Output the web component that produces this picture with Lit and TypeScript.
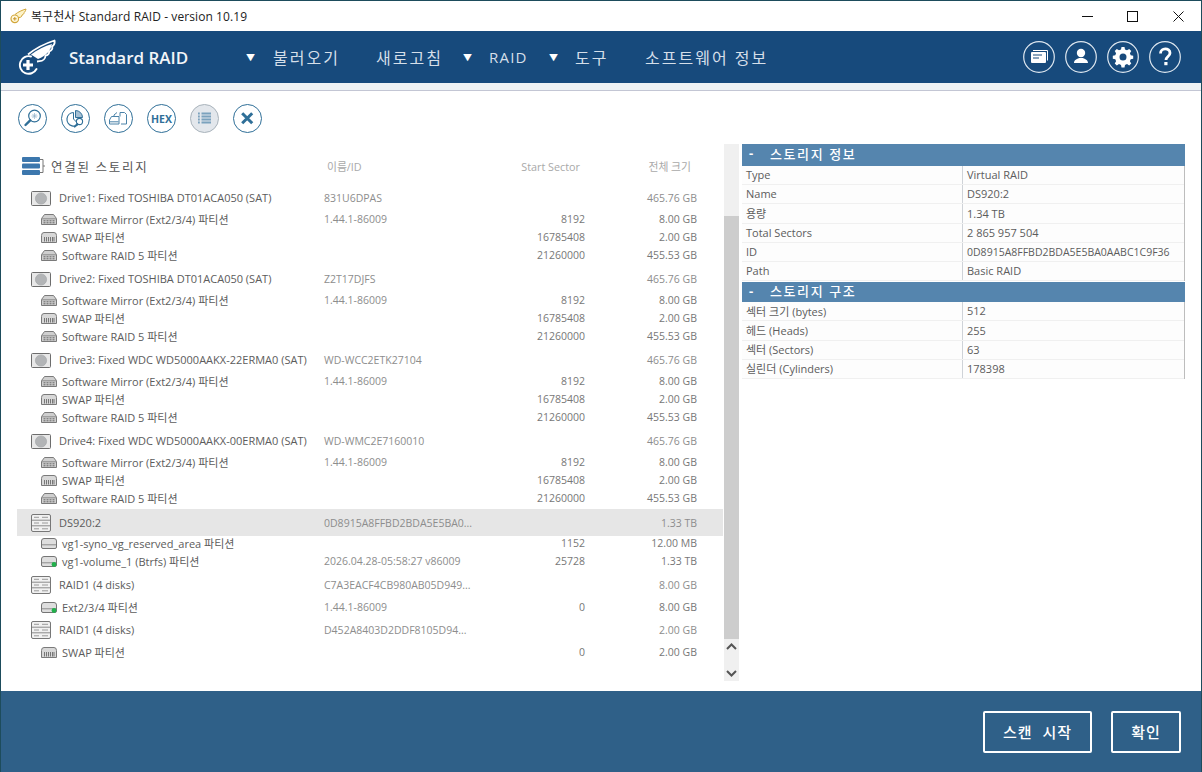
import { LitElement, html, css, svg } from "lit";
import { customElement } from "lit/decorators.js";

interface Row { t: "d" | "p"; k: string; name: string; id?: string; start?: string; size: string; sel?: boolean; cls?: string }

const partitions = (): Row[] => [
  { t: "p", k: "mirror", name: "Software Mirror (Ext2/3/4) 파티션", id: "1.44.1-86009", start: "8192", size: "8.00 GB" },
  { t: "p", k: "swap", name: "SWAP 파티션", start: "16785408", size: "2.00 GB" },
  { t: "p", k: "mirror", name: "Software RAID 5 파티션", start: "21260000", size: "455.53 GB" },
];
const rows: Row[] = [
  { t: "d", k: "hdd", name: "Drive1: Fixed TOSHIBA DT01ACA050 (SAT)", id: "831U6DPAS", size: "465.76 GB" },
  ...partitions(),
  { t: "d", k: "hdd", name: "Drive2: Fixed TOSHIBA DT01ACA050 (SAT)", id: "Z2T17DJFS", size: "465.76 GB", cls: "gap" },
  ...partitions(),
  { t: "d", k: "hdd", name: "Drive3: Fixed WDC WD5000AAKX-22ERMA0 (SAT)", id: "WD-WCC2ETK27104", size: "465.76 GB", cls: "gap" },
  ...partitions(),
  { t: "d", k: "hdd", name: "Drive4: Fixed WDC WD5000AAKX-00ERMA0 (SAT)", id: "WD-WMC2E7160010", size: "465.76 GB", cls: "gap" },
  ...partitions(),
  { t: "d", k: "rack", name: "DS920:2", id: "0D8915A8FFBD2BDA5E5BA0...", size: "1.33 TB", sel: true },
  { t: "p", k: "plain", name: "vg1-syno_vg_reserved_area 파티션", start: "1152", size: "12.00 MB", cls: "up" },
  { t: "p", k: "ok", name: "vg1-volume_1 (Btrfs) 파티션", id: "2026.04.28-05:58:27 v86009", start: "25728", size: "1.33 TB" },
  { t: "d", k: "rack", name: "RAID1 (4 disks)", id: "C7A3EACF4CB980AB05D949...", size: "8.00 GB", cls: "gap3" },
  { t: "p", k: "ok", name: "Ext2/3/4 파티션", id: "1.44.1-86009", start: "0", size: "8.00 GB", cls: "dn" },
  { t: "d", k: "rack", name: "RAID1 (4 disks)", id: "D452A8403D2DDF8105D94...", size: "2.00 GB", cls: "gap2" },
  { t: "p", k: "swap", name: "SWAP 파티션", start: "0", size: "2.00 GB", cls: "dn" },
];
const info = [["Type", "Virtual RAID"], ["Name", "DS920:2"], ["용량", "1.34 TB"], ["Total Sectors", "2 865 957 504"], ["ID", "0D8915A8FFBD2BDA5E5BA0AABC1C9F36"], ["Path", "Basic RAID"]];
const geo = [["섹터 크기 (bytes)", "512"], ["헤드 (Heads)", "255"], ["섹터 (Sectors)", "63"], ["실린더 (Cylinders)", "178398"]];

const rowIcon = (k: string) => {
  if (k === "hdd") return html`<svg class="ic-d" viewBox="0 0 20 15" width="20" height="15">
    <rect x=".5" y=".5" width="19" height="14" rx="1" fill="#e8e8e8" stroke="#6d6d6d"/>
    <circle cx="10" cy="7.5" r="5.6" fill="#b2b4b6" stroke="#a0a2a4" stroke-width=".6"/></svg>`;
  if (k === "rack") return html`<svg class="ic-d" viewBox="0 0 20 18" width="20" height="18">
    <rect x=".5" y=".5" width="19" height="17" rx="1.5" fill="#f1f1f1" stroke="#777"/>
    <path d="M1 6.200h18M1 11.800h18" stroke="#8a8a8a"/>
    ${[3.3, 9, 14.8].map((y) => svg`<path d="M3 ${y}h5M11 ${y}h6" stroke="#9a9a9a"/>`)}</svg>`;
  if (k === "mirror") return html`<svg class="ic-p" viewBox="0 0 16 11" width="16" height="11">
    <path d="M3.500.5h9l3 4v6H.5v-6z" fill="#cfcfcf" stroke="#7a7a7a"/>
    <path d="M1 4.800h14" stroke="#8a8a8a"/>
    <path d="M2.500 6.800h11M2.500 8.800h11" stroke="#666" stroke-dasharray="2 1"/></svg>`;
  if (k === "swap") return html`<svg class="ic-p" viewBox="0 0 16 11" width="16" height="11">
    <path d="M3 .5h10q2.500 0 2.500 3v7H.5v-7q0-3 2.500-3z" fill="#d8d8d8" stroke="#7a7a7a"/>
    <path d="M3.500 5v4.500M5.500 5v4.500M7.500 5v4.500M9.500 5v4.500M11.500 5v4.500M13 5v4.500" stroke="#777"/></svg>`;
  return html`<svg class="ic-p" viewBox="0 0 16 11" width="16" height="11">
    <path d="M3 .5h10q2.500 0 2.500 2.500v6q0 1.500-1.500 1.500H2q-1.500 0-1.500-1.500V3Q.5.500 3 .5z" fill="#dedede" stroke="#757575"/>
    <path d="M1 6.800h14" stroke="#8c8c8c"/>
    ${k === "ok" ? svg`<circle cx="13" cy="8.500" r="2.400" fill="#22b14c"/>` : ""}</svg>`;
};

const toolIcons = [
  svg`<circle cx="14.500" cy="9" r="5.800" fill="none" stroke="#2f6f98" stroke-width="1.200"/><path d="M14.500 6v6M11.500 9h6M12.400 6.900l4.200 4.200M16.600 6.900l-4.200 4.200" stroke="#8fb0c8" stroke-width=".7"/><path d="M10.200 13.300L5.500 18" stroke="#2f6f98" stroke-width="2.400" stroke-linecap="round"/>`,
  svg`<path d="M10.500 5.500a6.800 6.800 0 1 0 6.500 9.500" fill="none" stroke="#2f6f98" stroke-width="1.200"/><path d="M12.500 3.500a7 7 0 0 1 7 7h-7z" fill="#a5c0d4" stroke="#2f6f98"/><path d="M10.500 5.500v6.500l3 3" fill="none" stroke="#2f6f98"/><circle cx="16.500" cy="14.500" r="3.100" fill="#fff" stroke="#2f6f98" stroke-width="1.100"/><path d="M14.400 17l-2.700 2.700" stroke="#2f6f98" stroke-width="1.900" stroke-linecap="round"/>`,
  svg`<path d="M3.500 13l2-3.500h7.500v7.500h-9.500zM8 9.500V8l3-2.500" fill="none" stroke="#4a82a8"/><path d="M4 14.800h8.500" stroke="#4a82a8"/><path d="M14 5.500h4.500l2 2v9.500H15M14 5.500v4" fill="none" stroke="#4a82a8"/>`,
  null,
  svg`<path d="M6 6.500h1.800M6 9.500h1.800M6 12.500h1.800M6 15.500h1.800M9.500 6.500h9.500M9.500 9.500h9.500M9.500 12.500h9.500M9.500 15.500h9.500" stroke="#7ba2bd" stroke-width="1.800"/>`,
  svg`<path d="M7.200 6.200l10 10M17.200 6.200l-10 10" stroke="#2f6f98" stroke-width="3"/>`,
];

@customElement("app-root")
export class AppRoot extends LitElement {
  static styles = css`
    :host { display: flex; flex-direction: column; width: 1202px; height: 772px; box-sizing: border-box; border: 1px solid #1d4c5c; border-bottom: 0; background: #fff; overflow: hidden;
      font-family: "Open Sans", "Noto Sans CJK KR", sans-serif; font-size: 11px; color: #5c5c5c; }
    .title { height: 30px; flex: none; display: flex; align-items: center; background: #fff; color: #222; font-size: 12px; letter-spacing: .08px; padding-left: 9px; }
    .title .wing { margin-right: 4px; }
    .title span { flex: 1; }
    .win { display: flex; }
    .win div { width: 45.5px; height: 30px; display: flex; align-items: center; justify-content: center; }
    .head { height: 52px; flex: none; background: #174a7c; display: flex; align-items: center; color: #fff; }
    .logo { margin-left: 15px; flex: none; }
    .brand { font-size: 17px; font-weight: 600; margin-left: 13px; width: 177px; color: #f2f5f8; }
    .menu { display: flex; align-items: center; flex: 1; font-size: 16px; color: #d5dfe9; letter-spacing: 2px; white-space: nowrap; }
    .menu i { font-style: normal; font-size: 9px; color: #fff; letter-spacing: 0; }
    .menu b { font-weight: 400; }
    .menu .i1 { width: 27px; }
    .menu .i2, .menu .i3 { width: 26px; }
    .menu .m1 { width: 103px; }
    .menu .m2 { width: 87px; }
    .menu .m3 { width: 60px; font-size: 15px; letter-spacing: 1.200px; }
    .menu .m4 { width: 70px; }
    .rbtn { display: flex; gap: 10px; margin-right: 20px; }
    .rbtn svg { display: block; }
    .strip { height: 7px; flex: none; background: #eef2f4; border-bottom: 1px solid #c3c6d4; }
    .tools { height: 53px; flex: none; display: flex; gap: 14px; padding: 13px 0 0 17px; box-sizing: border-box; }
    .tb { width: 29px; height: 29px; box-sizing: border-box; border: 1px solid #2f6f98; border-radius: 50%; display: flex; align-items: center; justify-content: center; font: 700 10.500px "Open Sans", sans-serif; color: #2f6f98; }
    .tb.on { background: #e3e7ec; border-color: #a9b3bb; }
    .main { flex: 1; display: flex; min-height: 0; }
    .left { width: 706px; margin-left: 16px; flex: none; }
    .lhead { height: 42px; display: flex; align-items: flex-start; color: #a9a9a9; font-size: 10.800px; }
    .lhead .ttl { display: flex; align-items: center; gap: 6px; width: 310px; padding-left: 5px; box-sizing: border-box; color: #555; font-size: 12.500px; letter-spacing: 1.700px; margin-top: 12px; height: 20px; }
    .lhead .c { margin-top: 13px; height: 20px; line-height: 20px; }
    .lhead .c1 { width: 253px; }
    .lhead .c2 { width: 0; white-space: nowrap; direction: rtl; }
    .lhead .c3 { margin-left: 111px; width: 0; white-space: nowrap; direction: rtl; }
    .row { display: grid; grid-template-columns: 307px 261px 112px; align-items: center; height: 18px; white-space: nowrap; }
    .row.d { height: 24px; }
    .row.d .nm span { margin-bottom: 1px; }
    .row.gap { margin-top: 3px; }
    .row.gap2 { margin-top: 2px; }
    .row.gap3 { margin-top: 3px; }
    .row.up { margin-top: -2px; }
    .row.dn { margin-top: 1px; }
    .row.sel { height: 27px; margin-top: 2px; background: #e6e6e6; }
    .nm { display: flex; align-items: center; }
    .row.d .nm { padding-left: 14px; gap: 8px; }
    .row.p .nm { padding-left: 24px; gap: 5px; }
    .row svg { flex: none; }
    .idc { color: #8d8d8d; font-size: 10.500px; display: flex; justify-content: space-between; }
    .st, .sz { text-align: right; color: #777; font-size: 10.500px; }
    .row.d .sz { color: #8d8d8d; }
    .bar { width: 15px; margin-left: 1px; flex: none; background: #f0f0f0; display: flex; flex-direction: column; height: 537px; }
    .bar .a { height: 72px; }
    .bar .t { height: 423px; background: #cdcdcd; }
    .bar .arr { flex: 1; display: flex; flex-direction: column; align-items: center; justify-content: space-between; padding: 4px 0; box-sizing: border-box; }
    .right { margin: 0 16px 0 3px; flex: 1; }
    .sec { height: 22px; background: #5585ae; color: #fff; display: flex; align-items: center; font-size: 13px; letter-spacing: 1.600px; font-weight: 500; padding-bottom: 4px; box-sizing: border-box; }
    .sec b { width: 28px; padding-left: 7px; box-sizing: border-box; }
    .sec2 { height: 20px; margin-top: 1px; padding-bottom: 3px; }
    .rows { border-right: 1px solid #bdbdbd; }
    .kv { display: grid; grid-template-columns: 220px 1fr; height: 19.200px; align-items: center; border-bottom: 1px solid #f0f0f0; box-sizing: border-box; background: #fdfdfd; }
    .kv span { padding: 0 0 .6px 4px; height: 100%; display: flex; align-items: center; box-sizing: border-box; }
    .kv span + span { border-left: 1px solid #cfd3d8; }
    .kv span.hex { font-size: 10.500px; }
    .foot { height: 81px; flex: none; background: #2f6088; display: flex; justify-content: flex-end; align-items: center; gap: 19px; padding-right: 20px; }
    .btn { height: 42px; box-sizing: border-box; border: 2px solid #fff; border-radius: 2px; color: #fff; font-size: 15px; font-weight: 500; letter-spacing: 1px; word-spacing: 5px; display: flex; align-items: center; justify-content: center; }
    .b1 { width: 109px; } .b2 { width: 70px; }
  `;

  private kv(list: string[][]) {
    return html`<div class="rows">${list.map(([k, v]) => html`<div class="kv"><span>${k}</span><span class="${v.length > 20 ? "hex" : ""}">${v}</span></div>`)}</div>`;
  }

  render() {
    return html`
      <div class="title">
        <svg class="wing" viewBox="0 0 17 16" width="17" height="16">
          <path d="M5 6.500C8 4 12 2.200 16 1c-.5 2-1 3-2 3.500.3 1-.5 2-2 2.500 0 1.500-1 2.500-3 2.500l-1 2" fill="#fdf3c8" stroke="#d2a63a"/>
          <circle cx="4.800" cy="10.800" r="3.800" fill="#fff8dc" stroke="#d2a63a" stroke-width="1.200"/>
          <path d="M4.800 9v3.600M3 10.800h3.600" stroke="#c6952a"/></svg>
        <span>복구천사 Standard RAID - version 10.19</span>
        <div class="win">
          <div><svg width="11" height="11" viewBox="0 0 11 11"><path d="M0 5.500h11" stroke="#111"/></svg></div>
          <div><svg width="11" height="11" viewBox="0 0 11 11"><rect x=".5" y=".5" width="10" height="10" fill="none" stroke="#111"/></svg></div>
          <div><svg width="11" height="11" viewBox="0 0 11 11"><path d="M.5.500l10 10M10.500.500l-10 10" stroke="#111"/></svg></div>
        </div>
      </div>
      <div class="head">
        <svg class="logo" width="40" height="36" viewBox="0 0 40 36">
          <path d="M15 17.500A8.800 8.800 0 1 0 20.500 30" fill="none" stroke="#fff" stroke-width="1.900" stroke-linecap="round"/>
          <path d="M12 21v10M7 26h10" stroke="#fff" stroke-width="3.200"/>
          <path d="M12 15.500C20 9 29 4.500 38.500 1.500c.5 2.500-.5 5-2.500 6.300 1 1.700-.5 4-3 4.500.5 2-1 4-3.500 4.200 0 3-2.500 5.500-6 5.700l-2.500.3" fill="none" stroke="#fff" stroke-width="1.800" stroke-linejoin="round"/>
          <path d="M15 15.500C21 11 29 7 36 5c-1 6-6 12-14 15z" fill="#fff"/>
        </svg>
        <div class="brand">Standard RAID</div>
        <div class="menu">
          <i class="i1">▼</i><b class="m1">불러오기</b>
          <b class="m2">새로고침</b><i class="i2">▼</i>
          <b class="m3">RAID</b><i class="i3">▼</i>
          <b class="m4">도구</b>
          <b class="m5">소프트웨어 정보</b>
        </div>
        <div class="rbtn">
          ${[
            svg`<rect x="8" y="11" width="15" height="11" fill="#fff" rx="1"/><path d="M10 14h9M10 17h6" stroke="#174a7c" stroke-width="1.200"/><path d="M10 9.500h14.500v10" fill="none" stroke="#fff"/>`,
            svg`<circle cx="16" cy="12" r="4.200" fill="#fff"/><path d="M9 22c0-3 3-4 5-5h4c2 1 5 2 5 5z" fill="#fff"/>`,
            svg`<path fill="#fff" fill-rule="evenodd" d="M14.500 6h3l.5 2.500 2 .8 2.200-1.400 2.100 2.100-1.400 2.200.8 2 2.500.5v3l-2.500.5-.8 2 1.400 2.200-2.100 2.100-2.200-1.400-2 .8-.5 2.500h-3l-.5-2.500-2-.8-2.200 1.400-2.100-2.100 1.400-2.200-.8-2-2.500-.5v-3l2.500-.5.8-2-1.400-2.200 2.100-2.100 2.200 1.400 2-.8zM16 12.500a3.500 3.500 0 1 0 0 7 3.500 3.500 0 0 0 0-7z"/>`,
            svg`<path d="M11.500 12.500c0-6 9.500-6 9.500-.5 0 3.500-4 3.500-4 7" fill="none" stroke="#fff" stroke-width="2.800"/><rect x="15.300" y="21" width="3.200" height="3.200" fill="#fff"/>`,
          ].map((g) => html`<svg width="32" height="32" viewBox="0 0 32 32"><circle cx="16" cy="16" r="15.300" fill="none" stroke="#dfe8f0" stroke-width="1.200"/>${g}</svg>`)}
        </div>
      </div>
      <div class="strip"></div>
      <div class="tools">
        ${toolIcons.map((g, i) => html`<div class="tb ${i === 4 ? "on" : ""}">${g ? html`<svg width="25" height="23" viewBox="0 0 25 23">${g}</svg>` : "HEX"}</div>`)}
      </div>
      <div class="main">
        <div class="left">
          <div class="lhead">
            <div class="ttl">
              <svg width="23" height="19" viewBox="0 0 23 19"><g fill="#3c77ad"><rect y="0" width="18" height="5" rx="1"/><rect y="6.500" width="18" height="5" rx="1"/><rect y="13" width="18" height="5" rx="1"/></g><path d="M18 2.500h3v13h-3M21 9h2" fill="none" stroke="#777"/></svg>
              연결된 스토리지
            </div>
            <div class="c c1">이름/ID</div>
            <div class="c c2">Start Sector</div>
            <div class="c c3">전체 크기</div>
          </div>
          ${rows.map((r) => html`<div class="row ${r.t} ${r.sel ? "sel" : ""} ${r.cls ?? ""}">
            <div class="nm">${rowIcon(r.k)}<span>${r.name}</span></div>
            <div class="idc"><span>${r.id ?? ""}</span><span class="st">${r.start ?? ""}</span></div>
            <div class="sz">${r.size}</div>
          </div>`)}
        </div>
        <div class="bar">
          <div class="a"></div><div class="t"></div>
          <div class="arr">
            <svg width="11" height="7" viewBox="0 0 11 7"><path d="M1 6l4.500-4.500L10 6" fill="none" stroke="#555" stroke-width="2"/></svg>
            <svg width="11" height="7" viewBox="0 0 11 7"><path d="M1 1l4.500 4.500L10 1" fill="none" stroke="#555" stroke-width="2"/></svg>
          </div>
        </div>
        <div class="right">
          <div class="sec"><b>-</b>스토리지 정보</div>
          ${this.kv(info)}
          <div class="sec sec2"><b>-</b>스토리지 구조</div>
          ${this.kv(geo)}
        </div>
      </div>
      <div class="foot">
        <div class="btn b1">스캔 시작</div>
        <div class="btn b2">확인</div>
      </div>
    `;
  }
}
